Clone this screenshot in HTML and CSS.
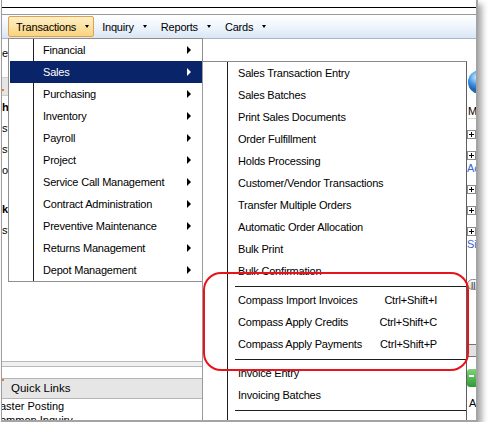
FILE: index.html
```html
<!DOCTYPE html>
<html lang="en">
<head>
    <meta charset="UTF-8">
    <meta name="viewport" content="width=device-width, initial-scale=1.0">
    <title>Transactions - Sales</title>
    <link rel="stylesheet" href="styles.css">
</head>
<body>

<div class="window">
    <div class="titlestrip"></div>
    <div class="substrip"></div>

    <nav class="menubar">
        <span class="mb-item open">Transactions<i class="down"></i></span>
        <span class="mb-item">Inquiry<i class="down"></i></span>
        <span class="mb-item">Reports<i class="down"></i></span>
        <span class="mb-item">Cards<i class="down"></i></span>
    </nav>

    <div class="workspace">
        <div class="pane">
            <div class="pane-top">ev</div>
            <div class="pane-head"><span class="mark"></span></div>
            <div class="pane-list">
                <div class="pane-row bold">hi</div>
                <div class="pane-row">st</div>
                <div class="pane-row">st</div>
                <div class="pane-row">o</div>
            </div>
            <div class="pane-list second">
                <div class="pane-row bold">ks</div>
                <div class="pane-row">st</div>
            </div>

            <div class="splitter"></div>
            <div class="ql-head"><span class="mark"></span>Quick Links</div>
            <div class="ql-row">aster Posting</div>
            <div class="ql-row">ommon Inquiry</div>
        </div>

        <div class="side">
            <div class="globe"></div>
            <div class="side-label">Mi</div>
            <div class="plus first"></div>
            <div class="plus"></div>
            <div class="side-link">Ac</div>
            <div class="plus"></div>
            <div class="plus"></div>
            <div class="plus"></div>
            <div class="side-link">Sit</div>
            <div class="pill">||</div>
            <div class="side-btn"></div>
            <div class="green"></div>
            <div class="side-text">A</div>
        </div>
    </div>

    <!-- open Transactions menu -->
    <div class="menu menu-main">
        <div class="mi"><span class="label">Financial</span><i class="arrow"></i></div>
        <div class="mi active"><span class="label">Sales</span><i class="arrow"></i></div>
        <div class="mi"><span class="label">Purchasing</span><i class="arrow"></i></div>
        <div class="mi"><span class="label">Inventory</span><i class="arrow"></i></div>
        <div class="mi"><span class="label">Payroll</span><i class="arrow"></i></div>
        <div class="mi"><span class="label">Project</span><i class="arrow"></i></div>
        <div class="mi"><span class="label">Service Call Management</span><i class="arrow"></i></div>
        <div class="mi"><span class="label">Contract Administration</span><i class="arrow"></i></div>
        <div class="mi"><span class="label">Preventive Maintenance</span><i class="arrow"></i></div>
        <div class="mi"><span class="label">Returns Management</span><i class="arrow"></i></div>
        <div class="mi"><span class="label">Depot Management</span><i class="arrow"></i></div>
    </div>

    <!-- Sales submenu -->
    <div class="menu menu-sub">
        <div class="mi"><span class="label">Sales Transaction Entry</span></div>
        <div class="mi"><span class="label">Sales Batches</span></div>
        <div class="mi"><span class="label">Print Sales Documents</span></div>
        <div class="mi"><span class="label">Order Fulfillment</span></div>
        <div class="mi"><span class="label">Holds Processing</span></div>
        <div class="mi"><span class="label">Customer/Vendor Transactions</span></div>
        <div class="mi"><span class="label">Transfer Multiple Orders</span></div>
        <div class="mi"><span class="label">Automatic Order Allocation</span></div>
        <div class="mi"><span class="label">Bulk Print</span></div>
        <div class="mi"><span class="label">Bulk Confirmation</span></div>
        <div class="sep"></div>
        <div class="mi"><span class="label">Compass Import Invoices</span><span class="keys">Ctrl+Shift+I</span></div>
        <div class="mi"><span class="label">Compass Apply Credits</span><span class="keys">Ctrl+Shift+C</span></div>
        <div class="mi"><span class="label">Compass Apply Payments</span><span class="keys">Ctrl+Shift+P</span></div>
        <div class="sep"></div>
        <div class="mi"><span class="label">Invoice Entry</span></div>
        <div class="mi"><span class="label">Invoicing Batches</span></div>
        <div class="sep"></div>
        <div class="mi"><span class="label">Transaction Entry</span></div>
    </div>

    <div class="callout"></div>
</div>

</body>
</html>
```

FILE: styles.css
```css
* {
    box-sizing: border-box;
}
body {
    margin: 0;
    background: #fff;
    font-family: "Liberation Sans", Arial, sans-serif;
    font-size: 11px;
    color: #000;
}
.window {
    position: relative;
    margin-left: 1px;
    width: 477px;
    height: 422px;
    overflow: hidden;
    background: #fff;
    border-left: 1px solid #9c9c9c;
    border-right: 2px solid #a4a4a4;
    border-bottom: 2px solid #a4a4a4;
    box-shadow: 4px 4px 6px rgba(0, 0, 0, 0.35);
}
.titlestrip {
    height: 8px;
    border-bottom: 1px solid #000;
}
.substrip {
    height: 7px;
    border-bottom: 1px solid #9a9a9a;
}

/* menu bar */
.menubar {
    display: flex;
    height: 24px;
    padding: 1px 0 0 6px;
    border-bottom: 1px solid #a7b5c8;
    background: linear-gradient(to bottom, #ffffff 0%, #f1f6fc 45%, #d9e6f5 100%);
}
.mb-item {
    display: flex;
    align-items: center;
    height: 21px;
    padding: 0 5px 0 7px;
    border: 1px solid transparent;
    letter-spacing: -0.2px;
}
.mb-item.open {
    padding-right: 4px;
    border-color: #e2a04c;
    border-radius: 2px;
    background: linear-gradient(to bottom, #fff0c8, #f9d47e);
}
.down {
    width: 0;
    height: 0;
    margin-left: 9px;
    border-left: 2.5px solid transparent;
    border-right: 2.5px solid transparent;
    border-top: 3px solid #000;
}

/* window content behind the menus */
.workspace {
    display: flex;
    height: 381px;
}
.pane {
    width: 465px;
    overflow: hidden;
    white-space: nowrap;
}
.pane-top {
    height: 38px;
    padding-top: 7px;
    line-height: 14px;
}
.pane-head {
    position: relative;
    height: 19px;
    background: #e5e5e5;
    border-top: 1px solid #cfcfcf;
    border-bottom: 1px solid #cfcfcf;
}
.mark {
    position: absolute;
    left: 0;
    top: 0;
    width: 2px;
    height: 2px;
    background: #f07a22;
}
.pane-head .mark {
    top: 11px;
}
.pane-list {
    margin-top: 1px;
}
.pane-list.second {
    margin-top: 18px;
}
.pane-row {
    height: 21px;
    line-height: 21px;
}
.bold {
    font-weight: bold;
}
.splitter {
    margin-top: 120px;
    height: 6px;
    background: #f0f0f0;
    border-top: 1px solid #b9b9b9;
    border-bottom: 1px solid #b9b9b9;
}
.ql-head {
    position: relative;
    margin-top: 11px;
    height: 21px;
    line-height: 19px;
    padding-left: 9px;
    background: #e6e6e6;
    border-top: 1px solid #b5b5b5;
    border-bottom: 1px solid #b5b5b5;
    font-size: 11.5px;
}
.ql-row {
    height: 14px;
    line-height: 14px;
    margin-left: -2px;
}

/* right edge column (mostly covered) */
.side {
    width: 9px;
    overflow: hidden;
    white-space: nowrap;
}
.side > div {
    flex-shrink: 0;
}
.globe {
    margin-top: 31px;
    margin-left: 1px;
    width: 24px;
    height: 24px;
    border-radius: 50%;
    background: radial-gradient(circle at 35% 30%, #c8ecff 0%, #3d8fe0 35%, #1f62b8 55%, #2f9a3e 80%, #1f7a2c 100%);
}
.side-label {
    margin-top: 10px;
    height: 15px;
    line-height: 15px;
    margin-left: 1px;
    border-bottom: 1px solid #d6d6d6;
}
.plus {
    position: relative;
    width: 9px;
    height: 9px;
    margin-top: 12px;
    margin-left: 0;
    border: 1px solid #8c8c8c;
    background: #fff;
}
.plus.first {
    margin-top: 11px;
}
.plus::before,
.plus::after {
    content: "";
    position: absolute;
    background: #000;
}
.plus::before {
    left: 1px;
    top: 3px;
    width: 5px;
    height: 1px;
}
.plus::after {
    left: 3px;
    top: 1px;
    width: 1px;
    height: 5px;
}
.side-link {
    margin-top: 3px;
    height: 10px;
    line-height: 10px;
    color: #3566d0;
}
.pill {
    margin-top: 30px;
    width: 14px;
    height: 11px;
    line-height: 9px;
    padding-left: 3px;
    font-size: 8px;
    font-weight: bold;
    color: #555;
    border: 1px solid #8a8a8a;
    border-radius: 6px;
    background: linear-gradient(to bottom, #fafafa, #d6d6d6);
}
.side-btn {
    margin-top: 54px;
    width: 14px;
    height: 13px;
    border: 1px solid #767676;
    background: #e2e2e2;
}
.green {
    position: relative;
    margin-top: 12px;
    width: 14px;
    height: 18px;
    border-radius: 3px;
    background: linear-gradient(to bottom, #7fd47a, #2e9a31);
}
.green::after {
    content: "";
    position: absolute;
    left: 2px;
    top: 6px;
    width: 5px;
    height: 2px;
    background: #fff;
}
.side-text {
    margin-top: 11px;
    margin-left: 2px;
    height: 10px;
    line-height: 10px;
}

/* dropdown menus, icon gutter line drawn in the background */
.menu {
    position: absolute;
    border: 1px solid #8e8e8e;
    background: linear-gradient(to right, transparent 24px, #1e1e1e 24px, #1e1e1e 25px, transparent 25px) no-repeat, #fff;
    letter-spacing: -0.2px;
    white-space: nowrap;
}
.menu-main {
    left: 6px;
    top: 38px;
    width: 195px;
    height: 244px;
}
.menu-sub {
    left: 200px;
    top: 61px;
    width: 265px;
    height: 380px;
    border-color: #8a8a8a #5e5e5e #5e5e5e #9a9a9a;
}
.mi {
    display: flex;
    align-items: center;
    height: 22px;
    margin-left: 1px;
}
.menu-main .mi {
    padding-left: 33px;
}
.menu-sub .mi {
    padding-left: 34px;
    padding-right: 29px;
}
.mi .label {
    flex: 1;
}
.mi.active {
    background: #0a246a;
    color: #fff;
}
.arrow {
    width: 0;
    height: 0;
    margin-right: 11px;
    border-top: 4px solid transparent;
    border-bottom: 4px solid transparent;
    border-left: 4px solid #000;
}
.mi.active .arrow {
    border-left-color: #fff;
}
.sep {
    height: 7px;
    padding: 4px 0 0 32px;
}
.sep::after {
    content: "";
    display: block;
    height: 1px;
    background: #1e1e1e;
}

/* red annotation ring */
.callout {
    position: absolute;
    left: 201px;
    top: 272px;
    width: 266px;
    height: 99px;
    border: 2px solid #e8131b;
    border-radius: 18px;
}
```
